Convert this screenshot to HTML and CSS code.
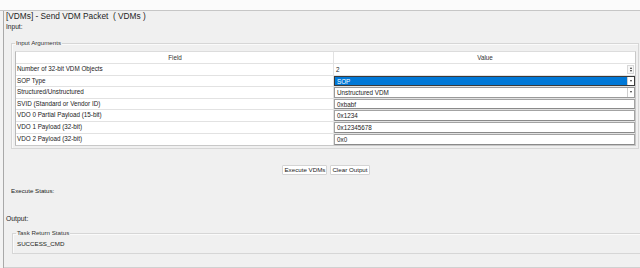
FILE: index.html
```html
<!DOCTYPE html>
<html>
<head>
<meta charset="utf-8">
<link rel="stylesheet" href="styles.css">
</head>
<body>
<div class="top"></div>
<div class="main">
  <div class="edge"></div>
  <div class="panel">
    <div class="title">[VDMs] - Send VDM Packet&nbsp; ( VDMs )</div>
    <div class="section">Input:</div>
    <fieldset class="group">
      <legend class="legend">Input Arguments</legend>
      <div class="grid">
        <div class="cell head key">Field</div>
        <div class="cell head">Value</div>

        <div class="cell key">Number of 32-bit VDM Objects</div>
        <div class="cell val"><div class="ctl spin"><span class="txt">2</span><span class="spinbtn"><span class="up"></span><span class="dn"></span></span></div></div>

        <div class="cell key">SOP Type</div>
        <div class="cell val"><div class="ctl sel selected"><span class="txt">SOP</span><span class="drop"><span class="dn"></span></span></div></div>

        <div class="cell key">Structured/Unstructured</div>
        <div class="cell val"><div class="ctl sel"><span class="txt">Unstructured VDM</span><span class="drop"><span class="dn"></span></span></div></div>

        <div class="cell key">SVID (Standard or Vendor ID)</div>
        <div class="cell val"><div class="ctl box"><span class="txt">0xbabf</span></div></div>

        <div class="cell key">VDO 0 Partial Payload (15-bit)</div>
        <div class="cell val"><div class="ctl box"><span class="txt">0x1234</span></div></div>

        <div class="cell key">VDO 1 Payload (32-bit)</div>
        <div class="cell val"><div class="ctl box"><span class="txt">0x12345678</span></div></div>

        <div class="cell key last">VDO 2 Payload (32-bit)</div>
        <div class="cell val last"><div class="ctl box"><span class="txt">0x0</span></div></div>
      </div>
    </fieldset>
    <div class="buttons">
      <button class="btn">Execute VDMs</button>
      <button class="btn">Clear Output</button>
    </div>
    <div class="status">Execute Status:</div>
    <div class="section out">Output:</div>
    <fieldset class="group result">
      <legend class="legend">Task Return Status</legend>
      <div class="resval">SUCCESS_CMD</div>
    </fieldset>
  </div>
</div>
</body>
</html>
```

FILE: styles.css
```css
* { box-sizing: border-box; }
html, body {
  margin: 0;
  padding: 0;
  width: 640px;
  height: 268px;
  overflow: hidden;
  background: #ffffff;
  font-family: "Liberation Sans", Arial, sans-serif;
  color: #222;
  font-size: 6.3px;
}
.top {
  height: 11px;
  background: #fbfbfb;
  border-bottom: 1px solid #c6c6c6;
}
.main {
  display: flex;
  height: 257px;
}
.edge {
  width: 4px;
  background: #f3f3f3;
  border-right: 1px solid #a9a9a9;
}
.panel {
  flex: 1;
  background: #f0f0f0;
  padding: 0 0 0 2px;
  border-bottom: 1px solid #d0d0d0;
  display: flex;
  flex-direction: column;
}
.title {
  font-size: 8.3px;
  line-height: 10px;
  color: #1e1e1e;
}
.section {
  font-size: 6.6px;
  line-height: 10px;
  margin-top: 1px;
}
.group {
  margin: 7px 1px 0 5px;
  padding: 4px 2px 2px 3px;
  border: 1px solid #d6d6d6;
  box-shadow: inset 1px 1px 0 #fafafa;
  min-width: 0;
}
.legend {
  padding: 0 1px;
  font-size: 6.2px;
  line-height: 8px;
  color: #333;
}
.grid {
  display: grid;
  grid-template-columns: 318px 1fr;
  grid-template-rows: 12px repeat(7, 11.6px);
  background: #ffffff;
  border-left: 1px solid #b9b9b9;
  border-top: 1px solid #dcdcdc;
  border-right: 1px solid #c8c8c8;
  border-bottom: 1px solid #c8c8c8;
}
.cell {
  border-bottom: 1px solid #e2e2e2;
  line-height: 10.6px;
  padding-left: 1px;
  white-space: nowrap;
  overflow: hidden;
}
.cell.last { border-bottom: none; }
.key { border-right: 1px solid #e2e2e2; }
.head {
  text-align: center;
  color: #333;
  line-height: 11px;
}
.val {
  padding: 0;
  display: flex;
}
.ctl {
  flex: 1;
  display: flex;
  align-items: stretch;
  height: 100%;
}
.txt {
  flex: 1;
  padding-left: 2px;
  line-height: 9.6px;
}
.spin .txt { line-height: 11px; }
.spinbtn {
  width: 7px;
  margin: 1px 1px 1px 0;
  border: 1px solid #d8d8d8;
  display: flex;
  flex-direction: column;
  align-items: center;
  justify-content: center;
  gap: 1px;
  background: #f7f7f7;
}
.up {
  width: 0; height: 0;
  border-left: 1.5px solid transparent;
  border-right: 1.5px solid transparent;
  border-bottom: 2px solid #333;
}
.dn {
  width: 0; height: 0;
  border-left: 1.5px solid transparent;
  border-right: 1.5px solid transparent;
  border-top: 2px solid #333;
}
.sel {
  border: 1px solid #9a9a9a;
  background: #fff;
}
.sel.selected {
  border-color: #3a3a3a;
}
.sel.selected .txt {
  background: #0078d7;
  color: #ffffff;
}
.drop {
  width: 7px;
  background: #ffffff;
  border-left: 1px solid #cfcfcf;
  display: flex;
  align-items: center;
  justify-content: center;
}
.box {
  border: 1px solid #a3a3a3;
  border-bottom-color: #8a8a8a;
  background: #fff;
}
.buttons {
  display: flex;
  justify-content: center;
  gap: 3px;
  margin-top: 16px;
  padding-left: 6px;
}
.btn {
  font-family: "Liberation Sans", Arial, sans-serif;
  font-size: 6.2px;
  height: 10px;
  line-height: 8px;
  padding: 0 1px;
  background: #ffffff;
  border: 1px solid #d4d4d4;
  border-radius: 1px;
  color: #222;
}
.status {
  margin: 12px 0 0 5px;
  line-height: 8px;
  font-size: 6.2px;
}
.out {
  margin-top: 19px;
  line-height: 9px;
  font-size: 6.8px;
}
.result {
  margin: 6px 0 0 6px;
  padding: 3px 0 5px 3px;
  border-right: none;
}
.resval {
  line-height: 8px;
  padding-left: 1px;
  font-size: 6.2px;
}
```
